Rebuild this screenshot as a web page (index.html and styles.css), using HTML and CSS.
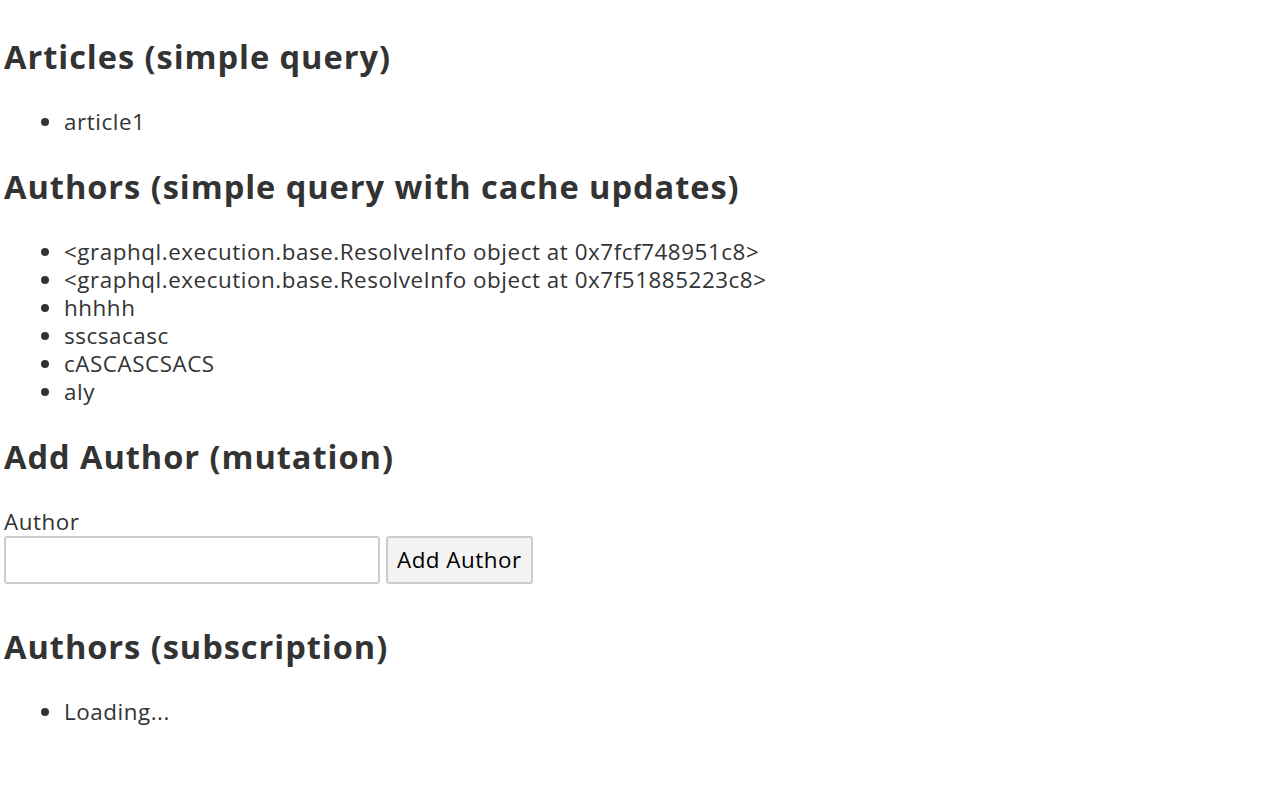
FILE: index.html
```html
<!DOCTYPE html>
<html lang="en">
<head>
<meta charset="utf-8">
<title>GraphQL demo</title>
<link rel="stylesheet" href="styles.css">
</head>
<body>
<div class="app">
  <h2 class="title">Articles (simple query)</h2>
  <ul class="list">
    <li>article1</li>
  </ul>
  <h2 class="title">Authors (simple query with cache updates)</h2>
  <ul class="list">
    <li>&lt;graphql.execution.base.ResolveInfo object at 0x7fcf748951c8&gt;</li>
    <li>&lt;graphql.execution.base.ResolveInfo object at 0x7f51885223c8&gt;</li>
    <li>hhhhh</li>
    <li>sscsacasc</li>
    <li>cASCASCSACS</li>
    <li>aly</li>
  </ul>
  <h2 class="title">Add Author (mutation)</h2>
  <form class="form">
    <label class="label" for="author">Author</label>
    <div class="row">
      <input class="input" id="author" type="text">
      <button class="button" type="button">Add Author</button>
    </div>
  </form>
  <h2 class="title">Authors (subscription)</h2>
  <ul class="list">
    <li>Loading...</li>
  </ul>
</div>
</body>
</html>
```
FILE: styles.css
```css
html, body {
  margin: 0;
  padding: 0;
  background: #fff;
}
body {
  font-family: "Open Sans", "Noto Sans", sans-serif;
  font-size: 22.4px;
  line-height: 28px;
  letter-spacing: 0.55px;
  color: #333;
}
.app {
  padding: 6px 4px;
}
.title {
  font-size: 32.6px;
  font-weight: 700;
  line-height: 42px;
  letter-spacing: 0.95px;
  margin: 30px 0 30px;
}
.list {
  margin: 20px 0;
  padding-left: 60px;
}
.form {
  margin: 0 0 42px;
}
.label {
  display: block;
}
.row {
  display: flex;
  gap: 6px;
}
.input {
  width: 376px;
  height: 48px;
  box-sizing: border-box;
  border: 2px solid #ccc;
  border-radius: 3px;
  font: inherit;
  padding: 0 8px;
}
.button {
  height: 48px;
  box-sizing: border-box;
  border: 2px solid #ccc;
  border-radius: 3px;
  background: #f3f3f3;
  color: #000;
  font: inherit;
  letter-spacing: 0.5px;
  padding: 0 9px;
}
```
